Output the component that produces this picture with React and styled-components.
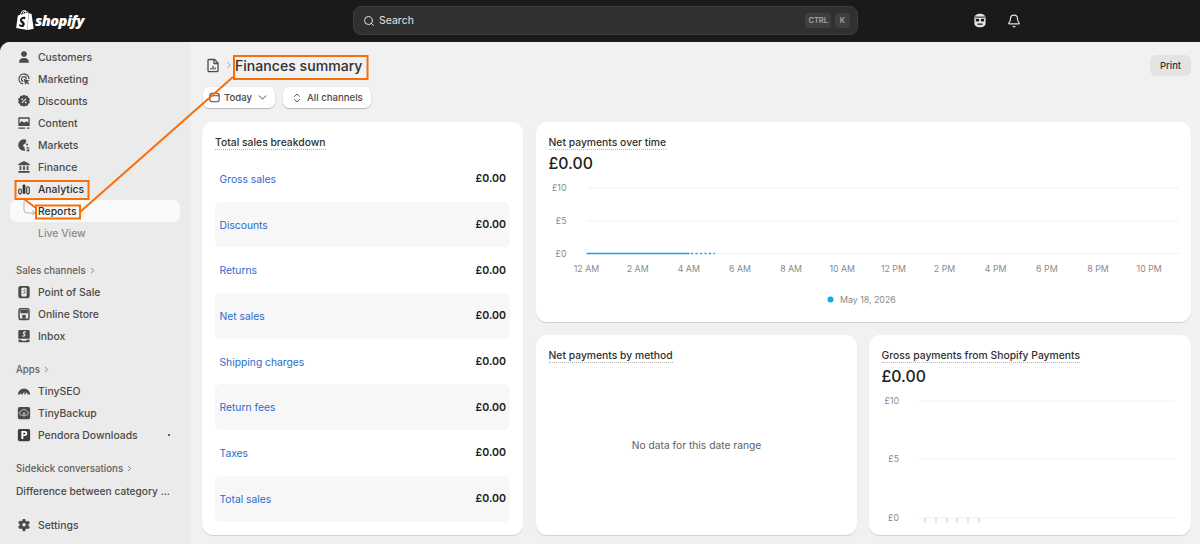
import React from "react";
import styled, { createGlobalStyle } from "styled-components";
import { SiShopify } from "react-icons/si";
import { Search, Bell, ChevronRight, ChevronDown, ChevronsUpDown } from "lucide-react";

const GlobalStyle = createGlobalStyle`
  html, body { margin: 0; padding: 0; background: #1a1a1a; }
  body { font-family: Inter, "Liberation Sans", sans-serif; overflow: hidden; }
`;

const Glyph = ({ children, size = 14 }) => (
  <svg width={size} height={size} viewBox="0 0 16 16" fill="#4a4a4a" aria-hidden="true">
    {children}
  </svg>
);

const icons = {
  customers: (
    <Glyph>
      <circle cx="8" cy="4.6" r="3.2" />
      <path d="M2.6 14.5v-1.6c0-2.4 2-3.9 5.4-3.9s5.4 1.5 5.4 3.9v1.6z" />
    </Glyph>
  ),
  marketing: (
    <Glyph>
      <path d="M8 1.5a6.5 6.5 0 0 0-1 12.9v-1.5A5 5 0 1 1 13 8h1.5A6.5 6.5 0 0 0 8 1.5z" />
      <path d="M8 4.5a3.5 3.5 0 0 0-.8 6.9V10a2.1 2.1 0 1 1 2.8-2h1.4A3.5 3.5 0 0 0 8 4.5z" />
      <path d="M7.6 7.6l7 2.4-2.7 1.2 2 2.2-1.1 1-2-2.2-1.1 2.8z" />
    </Glyph>
  ),
  discounts: (
    <Glyph>
      <path d="M8 .8l1.9 1.3 2.3-.1.7 2.2 1.9 1.3-.8 2.2.8 2.2-1.9 1.3-.7 2.2-2.3-.1L8 14.6l-1.9-1.3-2.3.1-.7-2.2-1.9-1.3.8-2.2-.8-2.2 1.9-1.3.7-2.2 2.3.1z" />
      <path d="M5.6 10.2l4.8-5" stroke="#ebebeb" strokeWidth="1.2" />
      <circle cx="6" cy="5.8" r="1" fill="#ebebeb" />
      <circle cx="10" cy="9.6" r="1" fill="#ebebeb" />
    </Glyph>
  ),
  content: (
    <Glyph>
      <path d="M2.5 1.5h11a1 1 0 0 1 1 1v8a1 1 0 0 1-1 1h-11a1 1 0 0 1-1-1v-8a1 1 0 0 1 1-1zM3 3v5.2l2.6-2.4 2.6 2 2.4-1.8L13 7.6V3z" fillRule="evenodd" />
      <rect x="1.5" y="13" width="8" height="1.5" rx=".7" />
      <rect x="11" y="13" width="3.5" height="1.5" rx=".7" />
    </Glyph>
  ),
  markets: (
    <Glyph>
      <path d="M8 1.5a6.5 6.5 0 1 0 1.5 12.8c-.8-1-1-1.8-.6-3.1L7 9.5l.6-2.5 2.4-1 .6-3.6A6.5 6.5 0 0 0 8 1.5z" />
      <circle cx="11.5" cy="7.5" r="1.1" />
      <path d="M11 10.5h3v1.2h-2v.8h2v2.5h-3v-1.2h1.8v-.9H11z" />
    </Glyph>
  ),
  finance: (
    <Glyph>
      <path d="M8 1l6.5 3.5V6h-13V4.5z" />
      <rect x="3" y="7" width="2" height="4.5" />
      <rect x="7" y="7" width="2" height="4.5" />
      <rect x="11" y="7" width="2" height="4.5" />
      <rect x="1.5" y="12.5" width="13" height="2" rx=".5" />
    </Glyph>
  ),
  analytics: (
    <Glyph size={12}>
      <rect x="1" y="8" width="3.4" height="6.5" rx="1.4" fill="none" stroke="#303030" strokeWidth="1.4" />
      <rect x="6.2" y="2" width="3.6" height="12.5" rx="1.4" fill="#303030" />
      <rect x="11.6" y="5" width="3.4" height="9.5" rx="1.4" fill="none" stroke="#303030" strokeWidth="1.4" />
    </Glyph>
  ),
  pos: (
    <Glyph>
      <rect x="1.5" y="1" width="13" height="14" rx="2.5" />
      <rect x="5" y="3" width="6" height="10" rx="1" fill="#ebebeb" />
      <path d="M9.5 5.2c-1.6-.6-2.7 1.3-.9 2.3 1.3.8.4 2.6-1.4 1.9" fill="none" stroke="#4a4a4a" strokeWidth="1" />
    </Glyph>
  ),
  store: (
    <Glyph>
      <rect x="1.5" y="1" width="13" height="14" rx="2.5" />
      <rect x="3.2" y="2.8" width="9.6" height="10.4" rx="1" fill="#ebebeb" />
      <path d="M3.5 3.5h9v3l-1.5 1.2-1.5-1-1.5 1-1.5-1-1.5 1-1-1z" />
      <rect x="6" y="9" width="4" height="4.2" />
    </Glyph>
  ),
  inbox: (
    <Glyph>
      <path d="M3 1h10a1.5 1.5 0 0 1 1.5 1.5V11H1.5V2.5A1.5 1.5 0 0 1 3 1z" />
      <path d="M1.5 12.3h3.3l1 1.200h4.400l1-1.200h3.300v1.200a1.500 1.500 0 0 1-1.500 1.500H3a1.500 1.500 0 0 1-1.500-1.500z" />
      <path d="M10.2 3.6c-2.2-.9-3.8.9-2 2.2 1.900 1.200.4 3-2.200 2" fill="none" stroke="#ebebeb" strokeWidth="1.3" />
    </Glyph>
  ),
  tinyseo: (
    <Glyph>
      <path d="M1 12a7 7 0 0 1 14 0h-2.600L11 9.500 9.500 12h-1l-.2-3.500-2 3.500h-1L4 10.500 3.400 12z" />
    </Glyph>
  ),
  tinybackup: (
    <Glyph>
      <rect x="1" y="1" width="14" height="14" rx="2" />
      <path d="M5 10.500a2.200 2.200 0 0 1-.2-4.400A3.300 3.300 0 0 1 11 6a2.300 2.300 0 0 1 .2 4.500z" fill="none" stroke="#c9c9c9" strokeWidth="1" />
      <path d="M8 12.500V7.500M6.500 9L8 7.500 9.500 9" fill="none" stroke="#c9c9c9" strokeWidth="1" />
    </Glyph>
  ),
  pendora: (
    <Glyph>
      <rect x="1" y="1" width="14" height="14" rx="2" fill="#3d3d3d" />
      <path d="M5 12.500v-9h4a2.800 2.800 0 0 1 0 5.700H7.200v3.300zM7.200 5.400v1.900H8.800a.95.95 0 0 0 0-1.900z" fill="#fff" fillRule="evenodd" />
    </Glyph>
  ),
  settings: (
    <Glyph>
      <path d="M6.600 1h2.800l.4 2 1.500.9 2-.7 1.400 2.400-1.600 1.400v1.800l1.600 1.400-1.400 2.400-2-.7-1.500.9-.4 2.200H6.600l-.4-2.200-1.500-.9-2 .7L1.300 10l1.600-1.400V6.800L1.300 5.400l1.400-2.400 2 .7 1.500-.9zM8 5.800a2 2 0 1 0 0 4 2 2 0 0 0 0-4z" fillRule="evenodd" />
    </Glyph>
  ),
};

const mainNav = [
  ["customers", "Customers"],
  ["marketing", "Marketing"],
  ["discounts", "Discounts"],
  ["content", "Content"],
  ["markets", "Markets"],
  ["finance", "Finance"],
];
const channels = [
  ["pos", "Point of Sale"],
  ["store", "Online Store"],
  ["inbox", "Inbox"],
];
const apps = [
  ["tinyseo", "TinySEO"],
  ["tinybackup", "TinyBackup"],
  ["pendora", "Pendora Downloads"],
];
const breakdown = [
  "Gross sales",
  "Discounts",
  "Returns",
  "Net sales",
  "Shipping charges",
  "Return fees",
  "Taxes",
  "Total sales",
];
const hours = ["12 AM", "2 AM", "4 AM", "6 AM", "8 AM", "10 AM", "12 PM", "2 PM", "4 PM", "6 PM", "8 PM", "10 PM"];

function NavRow({ icon, label, dot }) {
  return (
    <NavItem>
      <NavIcon>{icons[icon]}</NavIcon>
      <span>{label}</span>
      {dot && <PinDot />}
    </NavItem>
  );
}

function NetChart() {
  return (
    <ChartSvg width="630" height="132" viewBox="0 0 630 132">
      {[[9, "£10"], [42, "£5"], [74.5, "£0"]].map(([y, label]) => (
        <g key={label}>
          <line x1="38" x2="630" y1={y} y2={y} stroke="#f1f1f1" />
          <AxisText x="17.5" y={y + 3} textAnchor="end">{label}</AxisText>
        </g>
      ))}
      <line x1="37.5" x2="140.5" y1="74.5" y2="74.5" stroke="#1c9bf0" strokeWidth="1.5" />
      <line x1="142" x2="166" y1="74.5" y2="74.5" stroke="#1c9bf0" strokeWidth="1.5" strokeDasharray="2 2.5" />
      {hours.map((hour, i) => (
        <AxisText key={hour} x={37.5 + i * 51.15} y="93" textAnchor="middle">{hour}</AxisText>
      ))}
      <circle cx="281.5" cy="120.5" r="3" fill="#14a7f5" />
      <AxisText x="291" y="123.5">May 18, 2026</AxisText>
    </ChartSvg>
  );
}

function GrossChart() {
  return (
    <ChartSvg width="296" height="140" viewBox="0 0 296 140">
      {[[9, "£10"], [67, "£5"], [126, "£0"]].map(([y, label]) => (
        <g key={label}>
          <line x1="37" x2="293" y1={y} y2={y} stroke="#f1f1f1" />
          <AxisText x="17" y={y + 3} textAnchor="end">{label}</AxisText>
        </g>
      ))}
      {[43, 54, 65, 75, 86, 97].map((x) => (
        <line key={x} x1={x} x2={x} y1="126" y2="131" stroke="#c9c9c9" />
      ))}
    </ChartSvg>
  );
}

export default function App() {
  return (
    <>
      <GlobalStyle />
      <Page>
        <TopBar>
          <Logo>
            <SiShopify size={20} color="#fff" />
            <LogoWord>shopify</LogoWord>
          </Logo>
          <SearchBox>
            <Search size={12} strokeWidth={2} color="#e3e3e3" />
            <SearchLabel>Search</SearchLabel>
            <Key>CTRL</Key>
            <Key>K</Key>
          </SearchBox>
          <TopIcons>
            <svg width="14" height="15" viewBox="0 0 14 15" aria-hidden="true">
              <path d="M7 .8c3.4 0 5.600 1.600 5.600 4.400v5c0 2.500-2.200 4-5.600 4s-5.600-1.500-5.600-4v-5C1.400 2.400 3.600.8 7 .8z" fill="#e3e3e3" />
              <path d="M2 3.600h10v1H2z" fill="#1a1a1a" />
              <rect x="2.800" y="5.800" width="3.400" height="2.600" rx="1" fill="#1a1a1a" />
              <rect x="7.800" y="5.800" width="3.400" height="2.600" rx="1" fill="#1a1a1a" />
              <path d="M4.500 10.500h5v1.300h-5z" fill="#1a1a1a" />
            </svg>
            <Bell size={14} strokeWidth={2} color="#e3e3e3" />
          </TopIcons>
        </TopBar>

        <Frame>
          <Sidebar>
            {mainNav.map(([icon, label]) => (
              <NavRow key={label} icon={icon} label={label} />
            ))}
            <NavItem $active>
              <NavIcon>{icons.analytics}</NavIcon>
              <span>Analytics</span>
            </NavItem>
            <SubItem $selected>
              <Elbow width="13" height="14" viewBox="0 0 13 14" aria-hidden="true">
                <path d="M1 0v9a3 3 0 0 0 3 3h8M9 9.500l3 2.500-3 2" />
              </Elbow>
              Reports
            </SubItem>
            <SubItem>Live View</SubItem>

            <SectionHead $top={15}>
              Sales channels <ChevronRight size={9} />
            </SectionHead>
            {channels.map(([icon, label]) => (
              <NavRow key={label} icon={icon} label={label} />
            ))}

            <SectionHead $top={11}>
              Apps <ChevronRight size={9} />
            </SectionHead>
            {apps.map(([icon, label]) => (
              <NavRow key={label} icon={icon} label={label} dot={label === "Pendora Downloads"} />
            ))}

            <SectionHead $top={11}>
              Sidekick conversations <ChevronRight size={9} />
            </SectionHead>
            <Conversation>Difference between category ...</Conversation>
            <SettingsRow>
              <NavRow icon="settings" label="Settings" />
            </SettingsRow>
          </Sidebar>

          <Main>
            <PageHead>
              <Crumb>
                <svg width="14" height="15" viewBox="0 0 14 15" fill="none" stroke="#4a4a4a" strokeWidth="1.3" aria-hidden="true">
                  <path d="M3 1.500h5.500L12 5v7.500a1.200 1.200 0 0 1-1.200 1.200H3.200A1.200 1.200 0 0 1 2 12.500v-10a1 1 0 0 1 1-1z" />
                  <path d="M8 1.500V5.500h4M5 11.500v-1.500M7 11.500V8M9 11.500V9.500" />
                </svg>
                <ChevronRight size={10} color="#8a8a8a" />
              </Crumb>
              <Title>Finances summary</Title>
              <PrintButton>Print</PrintButton>
            </PageHead>

            <Filters>
              <FilterButton $pad={6}>
                <svg width="11" height="11" viewBox="0 0 13 13" fill="none" stroke="#4a4a4a" strokeWidth="1.3" aria-hidden="true">
                  <rect x="1" y="1.500" width="11" height="10" rx="2.500" />
                  <path d="M1 4.500h11" />
                </svg>
                <FilterLabel>Today</FilterLabel>
                <ChevronDown size={13} strokeWidth={1.8} />
              </FilterButton>
              <FilterButton $pad={8}>
                <ChevronsUpDown size={12} strokeWidth={1.8} />
                <FilterLabel>All channels</FilterLabel>
              </FilterButton>
            </Filters>

            <Columns>
              <BreakdownCard>
                <CardTitle>Total sales breakdown</CardTitle>
                <Rows>
                  {breakdown.map((label) => (
                    <Row key={label}>
                      <RowLink>{label}</RowLink>
                      <RowValue>£0.00</RowValue>
                    </Row>
                  ))}
                </Rows>
              </BreakdownCard>

              <RightColumn>
                <Card>
                  <CardTitle>Net payments over time</CardTitle>
                  <Amount>£0.00</Amount>
                  <NetChart />
                </Card>
                <BottomCards>
                  <Card>
                    <CardTitle>Net payments by method</CardTitle>
                    <EmptyState>No data for this date range</EmptyState>
                  </Card>
                  <Card>
                    <CardTitle>Gross payments from Shopify Payments</CardTitle>
                    <Amount>£0.00</Amount>
                    <GrossChart />
                  </Card>
                </BottomCards>
              </RightColumn>
            </Columns>
          </Main>

          <Annotations width="1200" height="544" viewBox="0 0 1200 544" aria-hidden="true">
            <path d="M80 212L233 77M24 199L36 208" />
            <rect x="234" y="56" width="133.500" height="23" />
            <rect x="15.500" y="181" width="73" height="18" />
            <rect x="36" y="205.500" width="44" height="13" />
          </Annotations>
        </Frame>
      </Page>
    </>
  );
}

const Page = styled.div`
  position: relative;
  width: 1200px;
  height: 544px;
  overflow: hidden;
  display: flex;
  flex-direction: column;
  background: #1a1a1a;
`;

const TopBar = styled.header`
  flex: 0 0 42px;
  box-sizing: border-box;
  display: flex;
  align-items: center;
  padding: 0 0 1px 15px;
`;

const Logo = styled.div`
  width: 338px;
  display: flex;
  align-items: center;
  margin-top: -1px;
`;

const LogoWord = styled.span`
  color: #fff;
  font-family: "Open Sans", "Liberation Sans", sans-serif;
  font-size: 14.5px;
  font-weight: 800;
  font-style: italic;
  letter-spacing: -0.5px;
`;

const SearchBox = styled.div`
  width: 505px;
  height: 29px;
  box-sizing: border-box;
  display: flex;
  align-items: center;
  gap: 4px;
  padding: 0 7px 0 9px;
  background: #303030;
  border: 1px solid #3d3d3d;
  border-radius: 8px;
`;

const SearchLabel = styled.span`
  flex: 1;
  color: #e3e3e3;
  font-size: 10.5px;
`;

const Key = styled.span`
  height: 15px;
  min-width: 9px;
  padding: 0 3px;
  display: flex;
  align-items: center;
  justify-content: center;
  border-radius: 4px;
  background: #3f3f3f;
  color: #a8a8a8;
  font-size: 7.5px;
  font-weight: 600;
`;

const TopIcons = styled.div`
  margin-left: 115px;
  display: flex;
  align-items: center;
  gap: 20px;
`;

const Frame = styled.div`
  position: relative;
  flex: 1;
  min-height: 0;
  display: flex;
  background: #f1f1f1;
  border-top-left-radius: 10px;
  overflow: hidden;
`;

const Sidebar = styled.nav`
  flex: 0 0 190px;
  box-sizing: border-box;
  padding-top: 4px;
  display: flex;
  flex-direction: column;
  background: #ebebeb;
`;

const NavItem = styled.div`
  height: 22px;
  display: flex;
  align-items: center;
  margin-left: 17px;
  color: ${(p) => (p.$active ? "#303030" : "#4a4a4a")};
  font-size: 10.4px;
  font-weight: 450;
`;

const NavIcon = styled.span`
  flex: 0 0 14px;
  margin-right: 7px;
  display: flex;
  align-items: center;
  justify-content: center;
`;

const PinDot = styled.i`
  width: 2.5px;
  height: 2.5px;
  margin-left: 30px;
  border-radius: 50%;
  background: #303030;
`;

const SubItem = styled.div`
  position: relative;
  height: 22px;
  display: flex;
  align-items: center;
  margin: 0 10px;
  padding-left: 28px;
  border-radius: 7px;
  font-size: 10.4px;
  font-weight: 450;
  color: ${(p) => (p.$selected ? "#303030" : "#8a8a8a")};
  background: ${(p) => (p.$selected ? "#fafafa" : "transparent")};
`;

const Elbow = styled.svg`
  position: absolute;
  left: 13px;
  top: 1px;
  fill: none;
  stroke: #b5b5b5;
  stroke-width: 1;
`;

const SectionHead = styled.div`
  height: 22px;
  margin-top: ${(p) => p.$top}px;
  padding-left: 16px;
  display: flex;
  align-items: center;
  gap: 2px;
  color: #616161;
  font-size: 9.7px;
  font-weight: 450;
`;

const Conversation = styled.div`
  height: 24px;
  padding-left: 16px;
  display: flex;
  align-items: center;
  color: #4a4a4a;
  font-size: 10.2px;
  font-weight: 450;
`;

const SettingsRow = styled.div`
  margin-top: 11px;
`;

const Main = styled.main`
  flex: 1;
  min-width: 0;
  box-sizing: border-box;
  padding: 0 9px 0 12px;
`;

const PageHead = styled.div`
  height: 42px;
  display: flex;
  align-items: center;
  padding-top: 6px;
  box-sizing: border-box;
  padding-bottom: 2px;
`;

const Crumb = styled.div`
  width: 34px;
  display: flex;
  align-items: center;
  gap: 4px;
  margin-left: 4px;
  margin-right: -5px;
`;

const Title = styled.h1`
  flex: 1;
  margin: 0;
  color: #303030;
  font-size: 14.1px;
  font-weight: 550;
`;

const PrintButton = styled.button`
  width: 41px;
  height: 21px;
  padding: 0;
  border: 0;
  border-radius: 6px;
  background: #e3e3e3;
  color: #303030;
  font: 500 9.5px Inter, sans-serif;
`;

const Filters = styled.div`
  display: flex;
  gap: 8px;
  margin-top: 3px;
  margin-left: 1px;
`;

const FilterButton = styled.button`
  height: 21px;
  display: flex;
  align-items: center;
  gap: 4px;
  padding: 0 ${(p) => p.$pad}px;
  border: 0;
  border-radius: 6px;
  background: #fff;
  box-shadow: 0 1px 1px rgba(0, 0, 0, 0.22), 0 0 0 0.5px rgba(0, 0, 0, 0.06);
  color: #4a4a4a;
`;

const FilterLabel = styled.span`
  font: 500 9.6px Inter, sans-serif;
`;

const Columns = styled.div`
  display: flex;
  gap: 13px;
  margin-top: 14px;
`;

const Card = styled.section`
  box-sizing: border-box;
  min-width: 0;
  height: 200px;
  padding: 12px 12.5px 0;
  display: flex;
  flex-direction: column;
  align-items: flex-start;
  background: #fff;
  border-radius: 11px;
  box-shadow: 0 1px 1px rgba(0, 0, 0, 0.14);
`;

const BreakdownCard = styled(Card)`
  flex: 0 0 321px;
  height: 413px;
  padding: 12px 13px 0;
`;

const RightColumn = styled.div`
  flex: 1;
  min-width: 0;
  display: grid;
  grid-template-rows: 200px 200px;
  gap: 13px;
`;

const BottomCards = styled.div`
  display: grid;
  grid-template-columns: 321px 1fr;
  gap: 12px;
`;

const CardTitle = styled.h2`
  margin: 0;
  height: 16px;
  padding-top: 1px;
  line-height: 14px;
  color: #303030;
  font-size: 10.35px;
  font-weight: 500;
  border-bottom: 1px dotted #b5b5b5;
  box-sizing: border-box;
`;

const Amount = styled.div`
  margin-top: 4px;
  height: 20px;
  line-height: 20px;
  color: #202020;
  font-size: 15.8px;
  font-weight: 500;
`;

const ChartSvg = styled.svg`
  display: block;
  margin-top: 5px;
  flex: none;
`;

const AxisText = styled.text`
  fill: #8a8a8a;
  font-size: 8.8px;
  font-family: Inter, sans-serif;
`;

const Rows = styled.div`
  width: 100%;
  margin-top: 6px;
  display: flex;
  flex-direction: column;
`;

const Row = styled.div`
  height: 45.7px;
  box-sizing: border-box;
  padding: 0 4px 0 4.5px;
  display: flex;
  align-items: center;
  justify-content: space-between;
  border-radius: 6px;

  &:nth-child(even) {
    background: #f7f7f7;
  }
`;

const RowLink = styled.span`
  color: #2a6bd0;
  font-size: 10.3px;
  font-weight: 400;
`;

const RowValue = styled.span`
  color: #202020;
  font-size: 10.6px;
  font-weight: 600;
`;

const EmptyState = styled.div`
  flex: 1;
  align-self: stretch;
  display: flex;
  align-items: center;
  justify-content: center;
  padding-bottom: 8px;
  color: #616161;
  font-size: 10.25px;
`;

const Annotations = styled.svg`
  position: absolute;
  left: 0;
  top: -42px;
  pointer-events: none;
  fill: none;
  stroke: #fa6e0a;
  stroke-width: 2;
`;
